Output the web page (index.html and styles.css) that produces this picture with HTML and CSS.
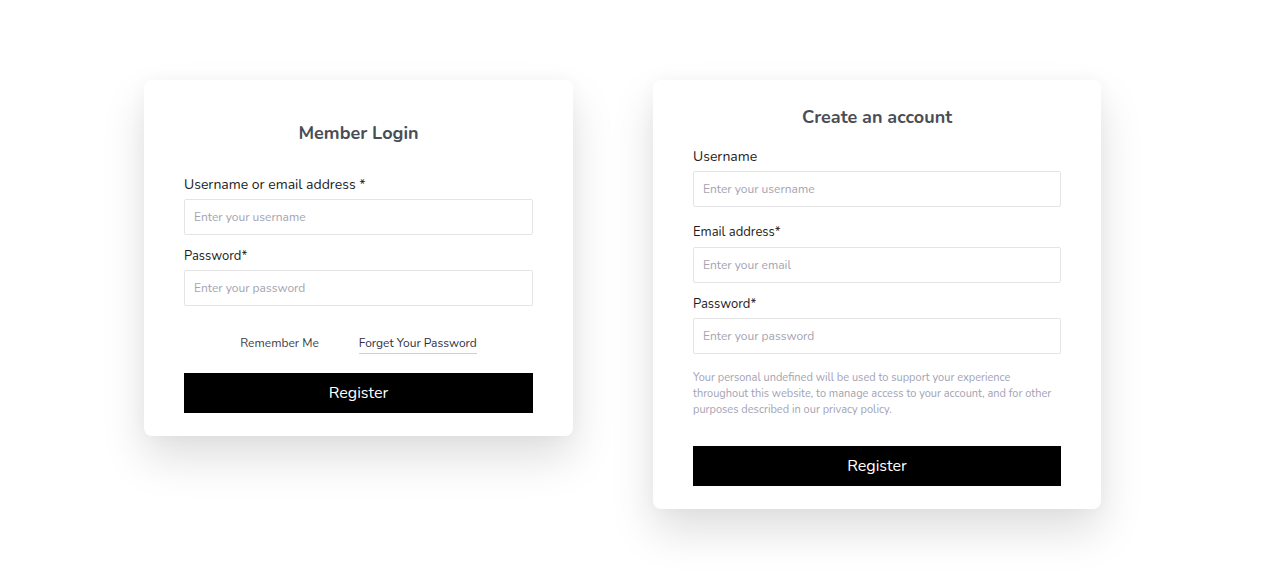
FILE: index.html
```html
<!DOCTYPE html>
<html lang="en">
<head>
<meta charset="utf-8">
<title>Login / Register</title>
<link rel="stylesheet" href="styles.css">
</head>
<body>
<main class="page">
  <section class="card card-login">
    <h2 class="card-title">Member Login</h2>
    <label class="label label-first">Username or email address *</label>
    <input class="field" type="text" placeholder="Enter your username">
    <label class="label">Password*</label>
    <input class="field" type="password" placeholder="Enter your password">
    <div class="options">
      <span class="remember">Remember Me</span>
      <a class="forgot" href="#">Forget Your Password</a>
    </div>
    <button class="btn btn-login" type="button">Register</button>
  </section>

  <section class="card card-register">
    <h2 class="card-title">Create an account</h2>
    <label class="label label-first label-reg-first">Username</label>
    <input class="field" type="text" placeholder="Enter your username">
    <label class="label label-reg">Email address*</label>
    <input class="field" type="email" placeholder="Enter your email">
    <label class="label">Password*</label>
    <input class="field" type="password" placeholder="Enter your password">
    <p class="privacy">Your personal undefined will be used to support your experience throughout this website, to manage access to your account, and for other purposes described in our privacy policy.</p>
    <button class="btn btn-register" type="button">Register</button>
  </section>
</main>
</body>
</html>
```

FILE: styles.css
```css
* { box-sizing: border-box; }

html, body {
  margin: 0;
  padding: 0;
  background: #ffffff;
  font-family: "Nunito", "Lato", "Noto Sans", sans-serif;
}

.page {
  display: flex;
  align-items: flex-start;
  gap: 80px;
  min-height: 100vh;
  padding: 80px 0 0 144px;
}

.card {
  display: flex;
  flex-direction: column;
  background: #fff;
  border-radius: 8px;
  box-shadow: 0 22px 44px rgba(0, 0, 0, 0.13), 0 0 18px rgba(0, 0, 0, 0.03);
  padding: 41px 40px 23px;
}

.card-login { width: 429px; }
.card-register { width: 448px; padding-top: 25px; }

.card-title {
  margin: 0;
  font-size: 18px;
  line-height: 25px;
  font-weight: 700;
  color: #494d55;
  text-align: center;
}

.label {
  display: block;
  font-size: 13px;
  line-height: 18px;
  color: #1c1b22;
  margin: 12px 0 5px;
}

.label-first {
  font-size: 14px;
  line-height: 20px;
  margin: 29px 0 4px;
}

.label-reg-first { margin-top: 17px; }
.label-reg { margin-top: 16px; margin-bottom: 6px; }

.field {
  display: block;
  width: 100%;
  height: 36px;
  border: 1px solid #e4e4e7;
  border-radius: 2px;
  padding: 0 9px;
  font-family: inherit;
  font-size: 12px;
  color: #333;
  outline: none;
  background: #fff;
}

.field::placeholder { color: #a4a3b1; }

.options {
  display: flex;
  justify-content: center;
  gap: 40px;
  margin-top: 29px;
  font-size: 12px;
  line-height: 17px;
}

.remember { color: #3d3d45; }

.forgot {
  color: #2e2e45;
  text-decoration: none;
  border-bottom: 1px solid #cfd0d6;
  padding-bottom: 1px;
}

.btn {
  display: block;
  width: 100%;
  height: 40px;
  border: 0;
  border-radius: 0;
  background: #000;
  color: #fff;
  font-family: inherit;
  font-size: 16px;
  cursor: pointer;
}

.btn-login { margin-top: 19px; }

.privacy {
  margin: 16px 0 0;
  font-size: 11px;
  line-height: 16px;
  color: #a3a2b4;
}

.btn-register { margin-top: 28px; }
```
